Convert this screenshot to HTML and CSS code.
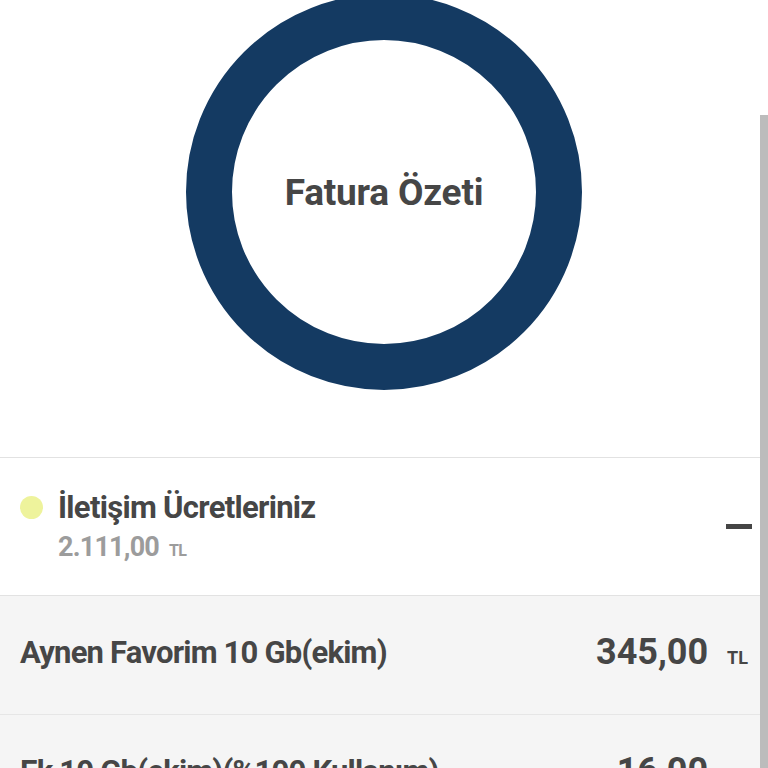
FILE: index.html
```html
<!DOCTYPE html>
<html lang="tr">
<head>
<meta charset="utf-8">
<title>Fatura Özeti</title>
<link rel="stylesheet" href="styles.css">
</head>
<body>
<div class="page">
  <section class="chart">
    <div class="ring"><span class="ring-title">Fatura Özeti</span></div>
  </section>
  <section class="list">
    <div class="group">
      <span class="dot"></span>
      <div class="group-text">
        <div class="group-title">İletişim Ücretleriniz</div>
        <div class="group-amount">2.111,00 <span class="cur">TL</span></div>
      </div>
      <span class="minus"></span>
    </div>
    <div class="item">
      <span class="item-name">Aynen Favorim 10 Gb(ekim)</span>
      <span class="item-price">345,00 <span class="cur">TL</span></span>
    </div>
    <div class="item">
      <span class="item-name">Ek 10 Gb(ekim)(%100 Kullanım)</span>
      <span class="item-price">16,00 <span class="cur">TL</span></span>
    </div>
  </section>
  <div class="scrollbar"></div>
</div>
</body>
</html>
```
FILE: styles.css
```css
html, body {
  margin: 0;
  padding: 0;
  background: #ffffff;
  font-family: Roboto, "Liberation Sans", sans-serif;
  color: #444444;
}
.page {
  position: relative;
  width: 768px;
  height: 768px;
  overflow: hidden;
}
.chart {
  height: 457px;
  display: flex;
  justify-content: center;
}
.ring {
  width: 304px;
  height: 304px;
  margin-top: -6px;
  border: 46px solid #143a62;
  border-radius: 50%;
  display: flex;
  align-items: center;
  justify-content: center;
  flex-shrink: 0;
}
.ring-title {
  font-size: 37px;
  font-weight: 700;
  color: #464646;
  letter-spacing: -0.2px;
}
.list {
  border-top: 1px solid #e2e2e2;
}
.group {
  height: 138px;
  display: flex;
  align-items: center;
  padding-left: 20px;
  padding-right: 16px;
  box-sizing: border-box;
  border-bottom: 1px solid #e2e2e2;
}
.dot {
  width: 23px;
  height: 23px;
  border-radius: 50%;
  background: #eef39c;
  align-self: flex-start;
  margin-top: 38px;
  flex-shrink: 0;
}
.group-text {
  margin-left: 15px;
  flex: 1;
}
.group-title {
  font-size: 31px;
  font-weight: 700;
  color: #464646;
  letter-spacing: -0.7px;
  line-height: 34px;
}
.group-amount {
  margin-top: 6px;
  font-size: 27px;
  font-weight: 700;
  color: #9c9c9c;
  letter-spacing: -0.8px;
}
.group-amount .cur {
  font-size: 16px;
  margin-left: 4px;
  letter-spacing: -0.5px;
}
.minus {
  width: 26px;
  height: 5px;
  background: #454545;
}
.item {
  height: 119px;
  background: #f5f5f5;
  display: flex;
  align-items: center;
  justify-content: space-between;
  padding: 0 20px 6px 20px;
  box-sizing: border-box;
  border-bottom: 1px solid #e6e6e6;
}
.item-name {
  font-size: 31px;
  font-weight: 700;
  color: #464646;
  letter-spacing: -0.8px;
}
.item-price {
  font-size: 36px;
  font-weight: 700;
  color: #464646;
}
.item-price .cur {
  font-size: 18px;
  margin-left: 10px;
}
.scrollbar {
  position: absolute;
  right: 0;
  top: 115px;
  bottom: 0;
  width: 8px;
  background: #bcbcbc;
}
```
